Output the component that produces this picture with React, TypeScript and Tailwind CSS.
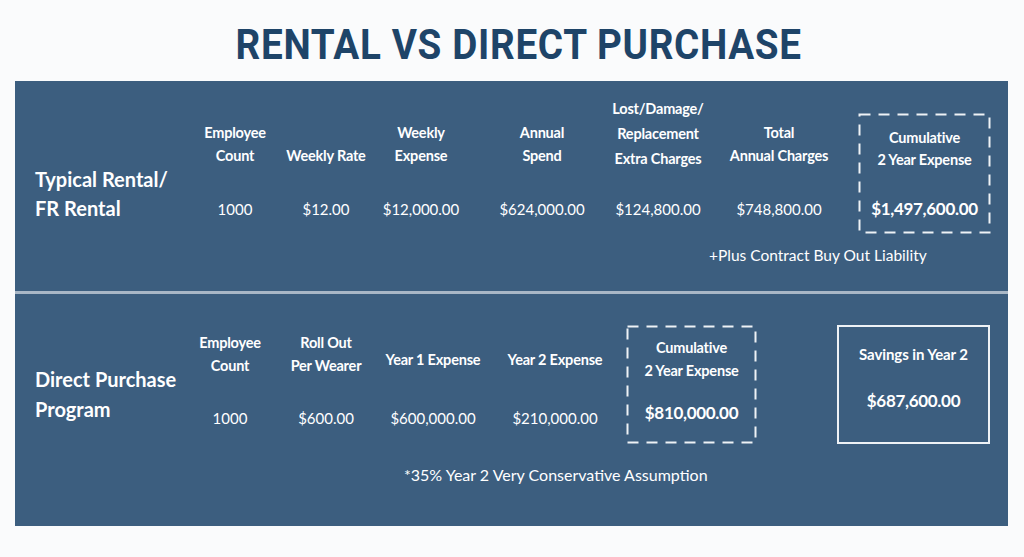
import React from "react";

const body = { fontFamily: "Lato, 'Open Sans', sans-serif" };

function DashedBox({ w, h, children }: { w: number; h: number; children: React.ReactNode }) {
  return (
    <div className="relative flex flex-col items-center" style={{ width: w, height: h }}>
      <svg className="absolute inset-0" width={w} height={h} viewBox={`0 0 ${w} ${h}`}>
        <rect x={1.5} y={1.5} width={w - 3} height={h - 3} fill="none" stroke="#eef2f6" strokeWidth={2} strokeDasharray="11 8" />
      </svg>
      {children}
    </div>
  );
}

export default function App() {
  return (
    <div className="w-[1024px] h-[557px] bg-[#fafbfc] flex flex-col text-white" style={body}>
      <div className="h-[81px] flex justify-center pt-[21px] pl-[13px]">
        <h1
          className="text-[42px] leading-[48px] font-bold text-[#1e4468] tracking-[0.7px] scale-x-[0.92]"
          style={{ fontFamily: "Roboto, 'Liberation Sans', sans-serif" }}
        >
          RENTAL VS DIRECT PURCHASE
        </h1>
      </div>
      <div className="ml-[15px] w-[993px] h-[445px] bg-[#3c5e7f] flex flex-col">
        {/* Top section */}
        <div className="h-[210px] flex flex-col">
          <div className="flex">
            <div className="w-[175px] pl-[20px] pt-[84px] text-[20px] leading-[29px] font-bold">
              <div>Typical Rental/</div>
              <div>FR Rental</div>
            </div>
            {[
              { w: 90, h: ["Employee", "Count"], v: "1000" },
              { w: 92, h: ["Weekly Rate"], v: "$12.00" },
              { w: 98, h: ["Weekly", "Expense"], v: "$12,000.00" },
              { w: 144, h: ["Annual", "Spend"], v: "$624,000.00" },
              { w: 88, h: ["Lost/Damage/", "Replacement", "Extra Charges"], v: "$124,800.00", lost: true },
              { w: 154, h: ["Total", "Annual Charges"], v: "$748,800.00" },
            ].map((c, i) => (
              <div key={i} className="flex flex-col items-center" style={{ width: c.w }}>
                <div
                  className={`flex flex-col justify-end items-center text-[14.5px] font-bold tracking-[-0.2px] whitespace-nowrap ${
                    c.lost ? "h-[90px] leading-[25px]" : "h-[86px] leading-[23px]"
                  }`}
                >
                  {c.h.map((t) => (
                    <div key={t}>{t}</div>
                  ))}
                </div>
                <div className={`${c.lost ? "mt-[26px]" : "mt-[30px]"} text-[15px] leading-[24px] whitespace-nowrap`}>{c.v}</div>
              </div>
            ))}
            <div className="ml-[2px] mt-[32px]">
              <DashedBox w={133} h={121}>
                <div className="pt-[14px] text-[14.5px] leading-[22px] font-bold tracking-[-0.2px] text-center whitespace-nowrap">
                  <div>Cumulative</div>
                  <div>2 Year Expense</div>
                </div>
                <div className="mt-[26px] text-[17px] leading-[24px] font-bold tracking-[-0.3px] whitespace-nowrap">$1,497,600.00</div>
              </DashedBox>
            </div>
          </div>
          <div className="pl-[694px] mt-[9px] text-[15.5px] leading-[24px] whitespace-nowrap">+Plus Contract Buy Out Liability</div>
        </div>
        <div className="h-[3px] bg-[#a9b7c6]" />
        {/* Bottom section */}
        <div className="flex-1 flex flex-col">
          <div className="flex">
            <div className="w-[175px] pl-[20px] pt-[70px] text-[20px] leading-[30px] font-bold">
              <div>Direct Purchase</div>
              <div>Program</div>
            </div>
            {[
              { w: 80, h: ["Employee", "Count"], v: "1000" },
              { w: 112, h: ["Roll Out", "Per Wearer"], v: "$600.00" },
              { w: 102, h: ["Year 1 Expense"], v: "$600,000.00" },
              { w: 142, h: ["Year 2 Expense"], v: "$210,000.00" },
            ].map((c, i) => (
              <div key={i} className="flex flex-col items-center" style={{ width: c.w }}>
                <div
                  className={`h-[83px] flex flex-col justify-end items-center text-[14.5px] leading-[23px] font-bold tracking-[-0.2px] whitespace-nowrap ${
                    c.h.length === 1 ? "pb-[6px]" : ""
                  }`}
                >
                  {c.h.map((t) => (
                    <div key={t}>{t}</div>
                  ))}
                </div>
                <div className="mt-[29px] text-[15px] leading-[24px] whitespace-nowrap">{c.v}</div>
              </div>
            ))}
            <div className="mt-[31px]">
              <DashedBox w={131} h={119}>
                <div className="pt-[11px] text-[14.5px] leading-[23px] font-bold tracking-[-0.2px] text-center whitespace-nowrap">
                  <div>Cumulative</div>
                  <div>2 Year Expense</div>
                </div>
                <div className="mt-[19px] text-[17px] leading-[24px] font-bold tracking-[-0.3px] whitespace-nowrap">$810,000.00</div>
              </DashedBox>
            </div>
            <div className="ml-[80px] mt-[31px] w-[153px] h-[119px] border-2 border-[#eef2f6] flex flex-col items-center">
              <div className="pt-[16px] text-[15px] leading-[23px] font-bold tracking-[-0.1px] whitespace-nowrap">Savings in Year 2</div>
              <div className="mt-[23px] text-[17px] leading-[24px] font-bold tracking-[-0.3px] whitespace-nowrap">$687,600.00</div>
            </div>
          </div>
          <div className="pl-[389px] mt-[19px] text-[16px] leading-[24px] whitespace-nowrap">*35% Year 2 Very Conservative Assumption</div>
        </div>
      </div>
    </div>
  );
}
